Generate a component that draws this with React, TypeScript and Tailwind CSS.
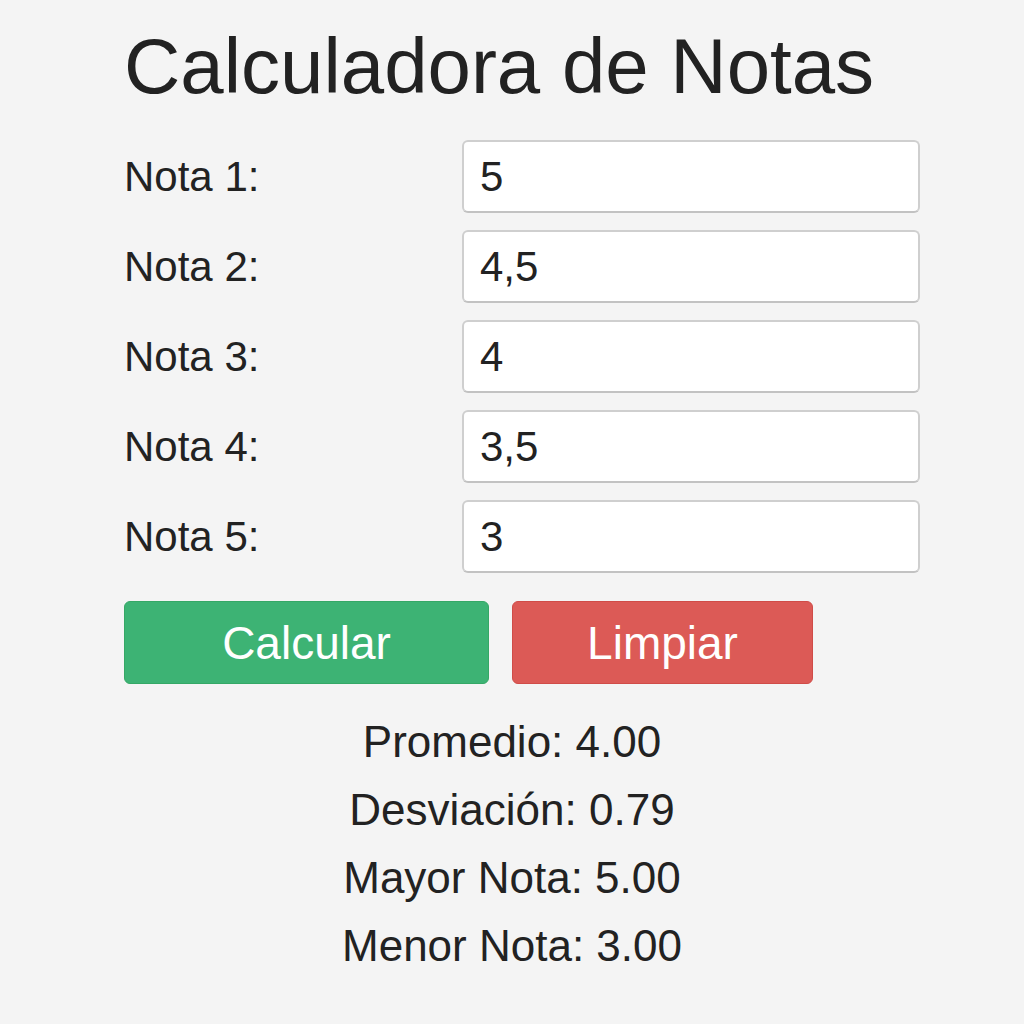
import { useState } from 'react';

const labels = ['Nota 1:', 'Nota 2:', 'Nota 3:', 'Nota 4:', 'Nota 5:'];
const initial = ['5', '4,5', '4', '3,5', '3'];

export default function App() {
  const [notas, setNotas] = useState<string[]>(initial);

  const setNota = (i: number, v: string) => {
    setNotas((prev) => prev.map((n, j) => (j === i ? v : n)));
  };

  return (
    <div
      className="min-h-[1024px] w-full bg-[#f4f4f4] text-[#222222]"
      style={{ fontFamily: '"Liberation Sans", Arial, sans-serif' }}
    >
      <div className="pl-[124px] pt-[27px] w-[920px]">
        <h1 className="text-[78px] leading-none font-normal">
          Calculadora de Notas
        </h1>

        <div className="mt-[35px] flex flex-col gap-[17px]">
          {labels.map((label, i) => (
            <div key={label} className="flex items-center">
              <label className="w-[338px] shrink-0 text-[42px] leading-none">{label}</label>
              <input
                value={notas[i]}
                onChange={(e) => setNota(i, e.target.value)}
                className="h-[73px] w-[458px] min-w-0 rounded-[6px] border-2 border-[#cfcfcf] border-b-[#c2c2c2] bg-white px-[16px] text-[42px] text-[#222222] outline-none"
              />
            </div>
          ))}
        </div>

        <div className="mt-[28px] flex gap-[23px]">
          <button className="h-[83px] w-[365px] rounded-[6px] border border-[#35a866] bg-[#3db374] text-[46px] leading-none text-white">
            Calcular
          </button>
          <button className="h-[83px] w-[301px] rounded-[6px] border border-[#d04c48] bg-[#dc5a56] text-[46px] leading-none text-white">
            Limpiar
          </button>
        </div>
      </div>

      <div className="mt-[24px] text-center text-[44px] leading-[68px]">
        <p>Promedio: 4.00</p>
        <p>Desviación: 0.79</p>
        <p>Mayor Nota: 5.00</p>
        <p>Menor Nota: 3.00</p>
      </div>
    </div>
  );
}
